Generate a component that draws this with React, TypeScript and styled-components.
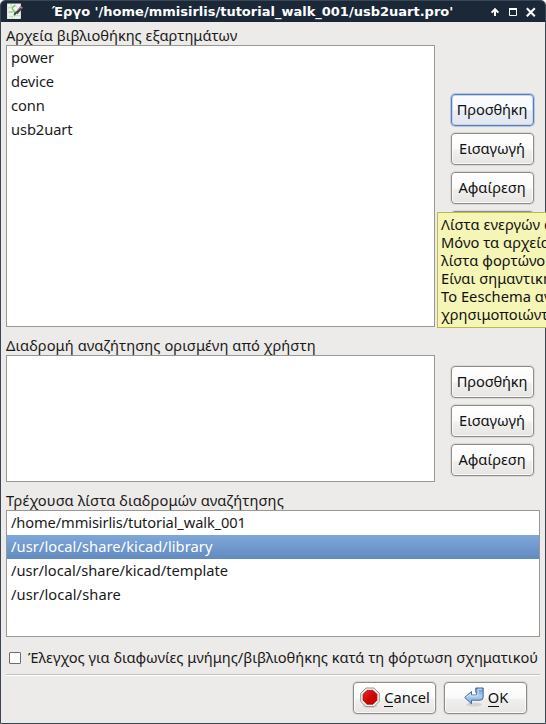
import React from 'react';
import styled, { createGlobalStyle, css } from 'styled-components';

const GlobalStyle = createGlobalStyle`
  * { box-sizing: border-box; }
  html, body { margin: 0; overflow: hidden; background: #fff; }
`;

const Desktop = styled.div`
  position: relative;
  width: 546px;
  height: 724px;
  overflow: hidden;
  color: #1a1a1a;
  font: 14.67px 'Noto Sans', 'Open Sans', sans-serif;
`;

const Window = styled.div`
  height: 724px;
  display: flex;
  flex-direction: column;
  overflow: hidden;
  background: #edebe9;
  border: 1px solid #3b4654;
  border-radius: 5px 5px 0 0;
`;

const TitleBar = styled.header`
  height: 21px;
  flex: none;
  display: flex;
  align-items: center;
  padding: 0 9px 0 5px;
  background: #1b2838;
`;

const Title = styled.h1`
  flex: 1;
  margin: 0;
  padding-left: 29px;
  color: #fff;
  font: bold 13px/21px 'DejaVu Sans', sans-serif;
  white-space: pre;
`;

const WindowControls = styled.div`
  display: flex;
  gap: 8px;
  align-items: center;
`;

const Content = styled.main`
  flex: 1;
  display: flex;
  flex-direction: column;
  padding: 3px 5px 0;
`;

const Section = styled.section<{ $height: number }>`
  height: ${(p) => p.$height}px;
  flex: none;
`;

const Label = styled.div<{ $spacing?: number }>`
  height: 20px;
  line-height: 21px;
  white-space: nowrap;
  letter-spacing: ${(p) => p.$spacing ?? 0}px;
`;

const Split = styled.div`
  display: flex;
`;

const ListBox = styled.ul<{ $width: number; $height: number }>`
  width: ${(p) => p.$width}px;
  height: ${(p) => p.$height}px;
  flex: none;
  margin: 0;
  padding: 0;
  list-style: none;
  background: #fff;
  border: 1px solid #9a9892;
`;

const ListItem = styled.li<{ $selected?: boolean; $spacing?: number }>`
  height: 24px;
  padding-left: 4px;
  line-height: 22px;
  white-space: nowrap;
  letter-spacing: ${(p) => p.$spacing ?? 0}px;
  ${(p) =>
    p.$selected &&
    css`
      color: #fff;
      background: linear-gradient(#80a7da, #608bc1);
    `}
`;

const ButtonColumn = styled.div<{ $top: number }>`
  display: flex;
  flex-direction: column;
  gap: 7px;
  padding: ${(p) => p.$top}px 0 0 16px;
`;

const Button = styled.button<{ $focused?: boolean; $spacing?: number }>`
  width: 83px;
  height: 32px;
  flex: none;
  display: flex;
  align-items: center;
  justify-content: center;
  gap: 4px;
  padding: 0 1px 2px 0;
  color: #111;
  font: inherit;
  white-space: nowrap;
  letter-spacing: ${(p) => p.$spacing ?? 0}px;
  border: 1px solid ${(p) => (p.$focused ? '#587fb4' : '#8f8d89')};
  border-radius: 4px;
  background: ${(p) =>
    p.$focused
      ? 'linear-gradient(#fafcff, #f6f9fd 50%, #e9eef5 52%, #e2e7ef)'
      : 'linear-gradient(#fff, #fafafa 50%, #f0f0ef 54%, #e6e5e4)'};
  box-shadow: ${(p) =>
    p.$focused
      ? 'inset 0 0 0 1px #c5d5ea, 0 0 0 1px #b5c6de'
      : 'inset 0 0 0 1px rgba(255,255,255,.7), 0 0 0 1px rgba(140,138,134,.2)'};
`;

const IconButton = styled(Button)`
  padding: 0 0 2px 1px;
`;

const Mnemonic = styled.span`
  box-shadow: 0 1px 0 #111;
  display: inline-block;
  line-height: 17px;
`;

const CheckRow = styled.label`
  height: 26px;
  display: flex;
  align-items: center;
  gap: 7px;
  padding-left: 3px;
`;

const CheckText = styled.span`
  padding-bottom: 2px;
  white-space: nowrap;
  letter-spacing: -0.03px;
`;

const CheckBox = styled.input`
  appearance: none;
  width: 12px;
  height: 12px;
  flex: none;
  margin: 0;
  background: #fff;
  border: 1px solid #6f6d6a;
  border-radius: 1px;
`;

const Divider = styled.hr`
  width: 534px;
  height: 2px;
  flex: none;
  margin: 3px 0 0;
  border: 0;
  border-top: 1px solid #c3c1bd;
  background: #fff;
`;

const Footer = styled.footer`
  display: flex;
  justify-content: flex-end;
  gap: 8px;
  padding: 6px 13px 0 0;
`;

const Tooltip = styled.div`
  position: absolute;
  left: 437px;
  top: 212px;
  width: 109px;
  height: 116px;
  padding: 3px 0 3px 3px;
  overflow: hidden;
  color: #111;
  background: #f5f5b5;
  border: 1px solid #bdb94a;
  border-right: 0;
`;

const TooltipLine = styled.div`
  height: 18px;
  line-height: 16px;
  white-space: nowrap;
  letter-spacing: 0.04px;
`;

const AppIcon = () => (
  <svg width="17" height="17" viewBox="0 0 16 16">
    <rect x="1" y="0.5" width="13" height="14.5" fill="#f2f4f0" />
    <path d="M5 1v3.5H2M8 1l2 3M3 12.5h3v2M9 12h4" fill="none" stroke="#b3d2a6" strokeWidth=".8" />
    <path d="M8.5 2.5C5 4 5.5 6 7.5 7.2s2.6 3.2 0 5.3M2.5 8.5H7" fill="none" stroke="#6ab562" strokeWidth="1.1" />
    <path d="M7 11.5l1.2-3 2 1.6z" fill="#333" />
    <path d="M8.8 9l4-5 2.3 1.7-4.4 5z" fill="#454545" />
    <path d="M12.8 4l1-1.3 2 1.6-.8 1.3z" fill="#c76d9c" />
    <path d="M10.8 7l2-2.4" stroke="#aaa" strokeWidth=".8" />
  </svg>
);

const StopIcon = () => (
  <svg width="20" height="21" viewBox="0 0 20 21">
    <ellipse cx="10" cy="18.9" rx="7.5" ry="1.8" fill="#000" opacity=".12" />
    <path d="M6 1h8l5.3 5.3v8L14 19.6H6L.7 14.3v-8z" fill="#efefed" stroke="#969792" />
    <path d="M7 3.4h6l3.9 3.9v6L13 17.2H7l-3.9-3.9v-6z" fill="url(#stopFill)" stroke="#a80000" strokeWidth=".8" />
    <defs>
      <linearGradient id="stopFill" x1="0" y1="0" x2="1" y2="1">
        <stop offset="0" stopColor="#e53030" />
        <stop offset=".5" stopColor="#d00808" />
        <stop offset="1" stopColor="#c00000" />
      </linearGradient>
    </defs>
  </svg>
);

const ReturnIcon = () => (
  <svg width="20" height="21" viewBox="0 0 20 21">
    <ellipse cx="10" cy="17.5" rx="8" ry="2" fill="#000" opacity=".1" />
    <path
      d="M.7 10.5l6.8-6V8h4.3q1 0 1-1V5.5h-1V1h7.4v9q0 3.2-3.2 3.2H7.5v3.6z"
      fill="url(#returnFill)"
      stroke="#3e6ba5"
      strokeLinejoin="round"
    />
    <path d="M2.3 10.5l4.3-3.7V9h6q1.4-.1 1.4-1.7V2.2h4" fill="none" stroke="#dcebfa" strokeWidth=".9" />
    <defs>
      <linearGradient id="returnFill" x1="0" y1="0" x2="0" y2="1">
        <stop offset="0" stopColor="#5f8fc7" />
        <stop offset=".5" stopColor="#b2cdea" />
        <stop offset="1" stopColor="#7ba7d8" />
      </linearGradient>
    </defs>
  </svg>
);

const ShadeIcon = () => (
  <svg width="10" height="11" viewBox="0 0 10 11">
    <path d="M5 10V3.4M1.6 6.6L5 3.2l3.4 3.4" fill="none" stroke="#fff" strokeWidth="2" />
  </svg>
);

const MaximizeIcon = () => (
  <svg width="10" height="11" viewBox="0 0 10 11">
    <path d="M1.5 2.5h7v7h-7z" fill="none" stroke="#fff" />
    <path d="M1 3h8" stroke="#fff" strokeWidth="2" />
  </svg>
);

const CloseIcon = () => (
  <svg width="10" height="11" viewBox="0 0 10 11">
    <path d="M.8 2.3l8 8M8.8 2.3l-8 8" stroke="#fff" strokeWidth="2.1" />
  </svg>
);

const libraries = ['power', 'device', 'conn', 'usb2uart'];

const searchPaths = [
  { path: '/home/mmisirlis/tutorial_walk_001', spacing: -0.12 },
  { path: '/usr/local/share/kicad/library', spacing: 0.07, selected: true },
  { path: '/usr/local/share/kicad/template', spacing: 0 },
  { path: '/usr/local/share', spacing: 0.09 },
];

const tooltipLines = [
  'Λίστα ενεργών α',
  'Μόνο τα αρχεία',
  'λίστα φορτώνο',
  'Είναι σημαντική',
  'Το Eeschema αν',
  'χρησιμοποιώντ',
];

const EditButtons = ({ top, focused }: { top: number; focused?: boolean }) => (
  <ButtonColumn $top={top}>
    <Button $focused={focused} $spacing={-0.15}>Προσθήκη</Button>
    <Button>Εισαγωγή</Button>
    <Button $spacing={-0.05}>Αφαίρεση</Button>
    {focused && <Button />}
  </ButtonColumn>
);

export default function App() {
  return (
    <>
      <GlobalStyle />
      <Desktop>
        <Window>
          <TitleBar>
            <AppIcon />
            <Title>Έργο '/home/mmisirlis/tutorial_walk_001/usb2uart.pro'</Title>
            <WindowControls>
              <ShadeIcon />
              <MaximizeIcon />
              <CloseIcon />
            </WindowControls>
          </TitleBar>
          <Content>
            <Section $height={310}>
              <Label>Αρχεία βιβλιοθήκης εξαρτημάτων</Label>
              <Split>
                <ListBox $width={429} $height={282}>
                  {libraries.map((name) => (
                    <ListItem key={name} $spacing={-0.08}>{name}</ListItem>
                  ))}
                </ListBox>
                <EditButtons top={49} focused />
              </Split>
            </Section>
            <Section $height={155}>
              <Label $spacing={0.07}>Διαδρομή αναζήτησης ορισμένη από χρήστη</Label>
              <Split>
                <ListBox $width={429} $height={127} />
                <EditButtons top={11} />
              </Split>
            </Section>
            <Section $height={155}>
              <Label $spacing={0.11}>Τρέχουσα λίστα διαδρομών αναζήτησης</Label>
              <ListBox $width={534} $height={127}>
                {searchPaths.map(({ path, spacing, selected }) => (
                  <ListItem key={path} $spacing={spacing} $selected={selected}>
                    {path}
                  </ListItem>
                ))}
              </ListBox>
            </Section>
            <CheckRow>
              <CheckBox type="checkbox" />
              <CheckText>Έλεγχος για διαφωνίες μνήμης/βιβλιοθήκης κατά τη φόρτωση σχηματικού</CheckText>
            </CheckRow>
            <Divider />
            <Footer>
              <IconButton>
                <StopIcon />
                <span><Mnemonic>C</Mnemonic>ancel</span>
              </IconButton>
              <IconButton>
                <ReturnIcon />
                <span><Mnemonic>O</Mnemonic>K</span>
              </IconButton>
            </Footer>
          </Content>
        </Window>
        <Tooltip role="tooltip">
          {tooltipLines.map((line) => (
            <TooltipLine key={line}>{line}</TooltipLine>
          ))}
        </Tooltip>
      </Desktop>
    </>
  );
}
